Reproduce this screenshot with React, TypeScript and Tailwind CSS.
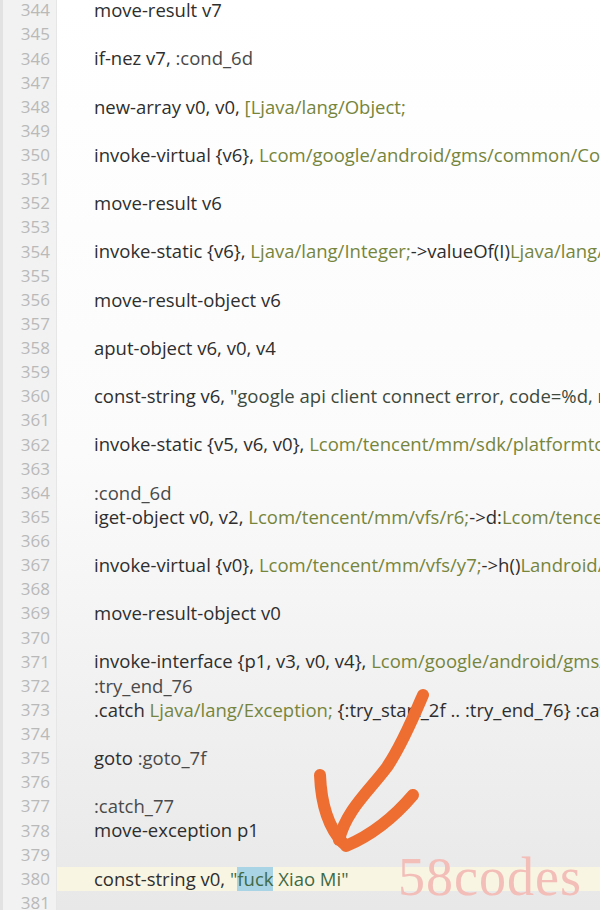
import React from "react";

type Seg = [string, string];

const D = "text-[#2e2e2e]";
const O = "text-[#76853c]";
const S = "text-[#3d4a3d]";
const G = "text-[#4a4a4a]";
const SG = "text-[#3f6a45]";

const lines: { n: number; segs: Seg[] }[] = [
  { n: 344, segs: [["move-result v7", D]] },
  { n: 345, segs: [] },
  { n: 346, segs: [["if-nez v7, ", D], [":cond_6d", G]] },
  { n: 347, segs: [] },
  { n: 348, segs: [["new-array v0, v0, ", D], ["[Ljava/lang/Object;", O]] },
  { n: 349, segs: [] },
  { n: 350, segs: [["invoke-virtual {v6}, ", D], ["Lcom/google/android/gms/common/ConnectionResult;->getErrorCode()I", O]] },
  { n: 351, segs: [] },
  { n: 352, segs: [["move-result v6", D]] },
  { n: 353, segs: [] },
  { n: 354, segs: [["invoke-static {v6}, ", D], ["Ljava/lang/Integer;", O], ["->valueOf(I)", D], ["Ljava/lang/Integer;", O]] },
  { n: 355, segs: [] },
  { n: 356, segs: [["move-result-object v6", D]] },
  { n: 357, segs: [] },
  { n: 358, segs: [["aput-object v6, v0, v4", D]] },
  { n: 359, segs: [] },
  { n: 360, segs: [["const-string v6, ", D], ["\"google api client connect error, code=%d, resolution=%s\"", S]] },
  { n: 361, segs: [] },
  { n: 362, segs: [["invoke-static {v5, v6, v0}, ", D], ["Lcom/tencent/mm/sdk/platformtools/n2;->e(Ljava/lang/String;", O]] },
  { n: 363, segs: [] },
  { n: 364, segs: [[":cond_6d", G]] },
  { n: 365, segs: [["iget-object v0, v2, ", D], ["Lcom/tencent/mm/vfs/r6;", O], ["->d:", D], ["Lcom/tencent/mm/vfs/y7;", O]] },
  { n: 366, segs: [] },
  { n: 367, segs: [["invoke-virtual {v0}, ", D], ["Lcom/tencent/mm/vfs/y7;", O], ["->h()", D], ["Landroid/net/Uri;", O]] },
  { n: 368, segs: [] },
  { n: 369, segs: [["move-result-object v0", D]] },
  { n: 370, segs: [] },
  { n: 371, segs: [["invoke-interface {p1, v3, v0, v4}, ", D], ["Lcom/google/android/gms/common/api/", O]] },
  { n: 372, segs: [[":try_end_76", G]] },
  { n: 373, segs: [[".catch ", D], ["Ljava/lang/Exception;", O], [" {:try_start_2f .. :try_end_76} :catch_77", D]] },
  { n: 374, segs: [] },
  { n: 375, segs: [["goto ", D], [":goto_7f", G]] },
  { n: 376, segs: [] },
  { n: 377, segs: [[":catch_77", G]] },
  { n: 378, segs: [["move-exception p1", D]] },
  { n: 379, segs: [] },
  { n: 380, segs: [["const-string v0, ", D], ["\"", SG], ["fuck", SG + " bg-[#a9d4e6]"], [" Xiao Mi\"", SG]] },
  { n: 381, segs: [] },
];

export default function App() {
  return (
    <div
      className="relative w-[600px] h-[910px] overflow-hidden bg-gradient-to-b from-white via-[#fbfbfb] to-[#e8e8e8]"
      style={{ fontFamily: '"Open Sans", "Noto Sans", sans-serif' }}
    >
      <div className="flex flex-col -mt-[2px]">
        {lines.map((l) => (
          <div key={l.n} className="flex h-[24.14px]">
            <div className="w-[57px] h-full shrink-0 bg-[#f2f2f2] border-r border-[#e6e6e6] border-l-[3px] border-l-[#e2e2e2] flex items-center justify-end pr-[6px] text-[17px] text-[#b9b9b9]">
              {l.n}
            </div>
            <div
              className={
                "flex-1 min-w-0 h-full block pl-[37px] whitespace-pre overflow-hidden text-[18.5px] leading-[24.14px] " +
                (l.n === 380 ? "bg-[#f8f5e2]" : "")
              }
            >
              {l.segs.map((s, i) => (
                <span key={i} className={s[1]}>
                  {s[0]}
                </span>
              ))}
            </div>
          </div>
        ))}
      </div>

      <svg
        className="absolute inset-0 pointer-events-none"
        width="600"
        height="910"
        viewBox="0 0 600 910"
      >
        <g fill="none" stroke="#ee6d30" strokeWidth="12" strokeLinecap="round" strokeLinejoin="round">
          <path d="M423 695 C 414 716, 402 745, 387 767 C 370 790, 346 810, 339 840" />
          <path d="M320 775 C 321 800, 327 826, 343 843" />
          <path d="M413 795 C 396 815, 372 835, 346 846" />
        </g>
      </svg>

      <div
        className="absolute left-[398px] top-[850px] text-[54px] leading-none text-[#f3bdb8] tracking-[1px]"
        style={{ fontFamily: '"Liberation Serif", serif' }}
      >
        58codes
      </div>
    </div>
  );
}
